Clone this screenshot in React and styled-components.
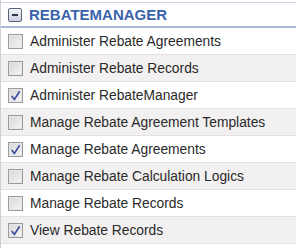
import React from "react";
import styled, { createGlobalStyle } from "styled-components";

const Global = createGlobalStyle`
  body {
    margin: 0;
    background: #fff;
    font-family: "Liberation Sans", Arial, sans-serif;
  }
`;

const Panel = styled.div`
  width: 296px;
  height: 248px;
  padding-top: 2px;
  box-sizing: border-box;
  border-left: 1px solid #d0d0d0;
  overflow: hidden;
`;

const Header = styled.div`
  display: flex;
  align-items: center;
  gap: 7px;
  height: 23px;
  padding-left: 7px;
  border-top: 1px solid #c9d3e8;
  border-bottom: 2px solid #a9b9da;
  background: #fff;
`;

const Toggle = styled.span`
  width: 12px;
  height: 12px;
  border: 1px solid #5a6478;
  border-radius: 2px;
  background: linear-gradient(#f4f6fa, #c8cfdc);
  display: flex;
  align-items: center;
  justify-content: center;
  &::after {
    content: "";
    width: 6px;
    height: 2px;
    background: #2e3850;
  }
`;

const Title = styled.span`
  font-weight: bold;
  font-size: 15px;
  color: #3a63ac;
`;

const Row = styled.label`
  display: flex;
  align-items: center;
  gap: 7px;
  height: 26px;
  padding-left: 7px;
  border-bottom: 1px solid #e2e0e0;
  background: ${(p) => (p.$alt ? "#f2f0f0" : "#fff")};
  font-size: 13.8px;
  color: #2a2a2a;
  white-space: nowrap;
`;

const Box = styled.span`
  width: 13px;
  height: 13px;
  flex: none;
  border: 1px solid #9a9a9a;
  background: linear-gradient(135deg, #d6d6d6, #f6f6f6);
  box-shadow: inset 0 0 0 1px #e8e8e8;
  display: flex;
  align-items: center;
  justify-content: center;
`;

const Check = () => (
  <svg width="11" height="11" viewBox="0 0 10 10">
    <path d="M1.5 5.5 L4 8.5 L8.8 1.2" fill="none" stroke="#3b4aa0" strokeWidth="1.5" />
  </svg>
);

const items = [
  ["Administer Rebate Agreements", false],
  ["Administer Rebate Records", false],
  ["Administer RebateManager", true],
  ["Manage Rebate Agreement Templates", false],
  ["Manage Rebate Agreements", true],
  ["Manage Rebate Calculation Logics", false],
  ["Manage Rebate Records", false],
  ["View Rebate Records", true],
];

export default function App() {
  return (
    <>
      <Global />
      <Panel>
        <Header>
          <Toggle />
          <Title>REBATEMANAGER</Title>
        </Header>
        {items.map(([name, on], i) => (
          <Row key={name} $alt={i % 2 === 1}>
            <Box>{on && <Check />}</Box>
            {name}
          </Row>
        ))}
      </Panel>
    </>
  );
}
